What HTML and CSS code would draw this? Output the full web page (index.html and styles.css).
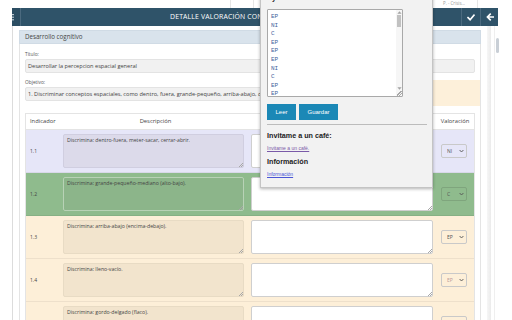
FILE: index.html
```html
<!DOCTYPE html>
<html lang="es">
<head>
<meta charset="utf-8">
<title>Detalle valoración</title>
<link rel="stylesheet" href="styles.css">
</head>
<body>
<div class="topstrip">
  <span class="tabsep tabsep-a"></span>
  <span class="tabsep tabsep-b"></span>
  <span class="crumb">P. - Crisis...</span>
  <span class="tabsep"></span>
</div>
<div class="app">
  <div class="bar">
    <div class="bar-menu">
      <svg width="8" height="18" viewBox="0 0 8 18"><rect x="-2" y="6" width="4" height="1.2" fill="#b9c6d0"/><rect x="-2" y="8.6" width="4" height="1.2" fill="#b9c6d0"/><rect x="-2" y="11.2" width="4" height="1.2" fill="#b9c6d0"/></svg>
    </div>
    <div class="bar-title">Detalle valoración contenidos</div>
    <div class="bar-btn">
      <svg width="8" height="7" viewBox="0 0 8 7"><polyline points="1,3.6 3.1,5.7 7,1.2" fill="none" stroke="#fff" stroke-width="1.7" stroke-linecap="square"/></svg>
    </div>
    <div class="bar-btn">
      <svg width="8" height="8" viewBox="0 0 8 8"><path d="M7.4 4H1.6M4.2 1.2L1.4 4l2.8 2.8" fill="none" stroke="#fff" stroke-width="1.6" stroke-linecap="square"/></svg>
    </div>
  </div>
  <div class="main">
    <div class="content">
      <div class="card">
        <div class="card-header">Desarrollo cognitivo</div>
        <div class="card-body">
          <div class="group group-first">
            <div class="label">Título:</div>
            <div class="field">Desarrollar la percepcion espacial general</div>
          </div>
          <div class="obj-row">
            <div class="group obj-group">
              <div class="label">Objetivo:</div>
              <div class="field">1. Discriminar conceptos espaciales, como dentro, fuera, grande-pequeño, arriba-abajo, delante-detrás, cerca-lejos.</div>
            </div>
            <div class="obj-aside"></div>
          </div>
          <div class="table">
            <div class="thead">
              <div class="th th-left">Indicador</div>
              <div class="th">Descripción</div>
              <div class="th">Observaciones</div>
              <div class="th">Valoración</div>
            </div>
            <div class="row row-ni">
              <div class="cell-ind">1.1</div>
              <div class="cell-desc"><div class="ta-wrap"><textarea class="ta-desc">Discrimina: dentro-fuera, meter-sacar, cerrar-abrir.</textarea><span class="grip"></span></div></div>
              <div class="cell-obs"><div class="ta-wrap"><textarea class="ta-obs"></textarea><span class="grip"></span></div></div>
              <div class="cell-val"><div class="sel"><select><option>NI</option></select><svg class="chev" width="5" height="4" viewBox="0 0 5 4"><polyline points="0.6,1 2.5,3 4.4,1" fill="none" stroke="#555" stroke-width="0.9"/></svg></div></div>
            </div>
            <div class="row row-c">
              <div class="cell-ind">1.2</div>
              <div class="cell-desc"><div class="ta-wrap"><textarea class="ta-desc">Discrimina: grande-pequeño-mediano (alto-bajo).</textarea><span class="grip"></span></div></div>
              <div class="cell-obs"><div class="ta-wrap"><textarea class="ta-obs"></textarea><span class="grip"></span></div></div>
              <div class="cell-val"><div class="sel"><select><option>C</option></select><svg class="chev" width="5" height="4" viewBox="0 0 5 4"><polyline points="0.6,1 2.5,3 4.4,1" fill="none" stroke="#555" stroke-width="0.9"/></svg></div></div>
            </div>
            <div class="row row-ep">
              <div class="cell-ind">1.3</div>
              <div class="cell-desc"><div class="ta-wrap"><textarea class="ta-desc">Discrimina: arriba-abajo (encima-debajo).</textarea><span class="grip"></span></div></div>
              <div class="cell-obs"><div class="ta-wrap"><textarea class="ta-obs"></textarea><span class="grip"></span></div></div>
              <div class="cell-val"><div class="sel"><select><option>EP</option></select><svg class="chev" width="5" height="4" viewBox="0 0 5 4"><polyline points="0.6,1 2.5,3 4.4,1" fill="none" stroke="#555" stroke-width="0.9"/></svg></div></div>
            </div>
            <div class="row row-ep">
              <div class="cell-ind">1.4</div>
              <div class="cell-desc"><div class="ta-wrap"><textarea class="ta-desc">Discrimina: lleno-vacío.</textarea><span class="grip"></span></div></div>
              <div class="cell-obs"><div class="ta-wrap"><textarea class="ta-obs"></textarea><span class="grip"></span></div></div>
              <div class="cell-val"><div class="sel"><select class="sel-faint"><option>EP</option></select><svg class="chev" width="5" height="4" viewBox="0 0 5 4"><polyline points="0.6,1 2.5,3 4.4,1" fill="none" stroke="#555" stroke-width="0.9"/></svg></div></div>
            </div>
            <div class="row row-ep">
              <div class="cell-ind">1.5</div>
              <div class="cell-desc"><div class="ta-wrap"><textarea class="ta-desc">Discrimina: gordo-delgado (flaco).</textarea><span class="grip"></span></div></div>
              <div class="cell-obs"><div class="ta-wrap"><textarea class="ta-obs"></textarea><span class="grip"></span></div></div>
              <div class="cell-val"><div class="sel"><select><option>EP</option></select><svg class="chev" width="5" height="4" viewBox="0 0 5 4"><polyline points="0.6,1 2.5,3 4.4,1" fill="none" stroke="#555" stroke-width="0.9"/></svg></div></div>
            </div>
          </div>
        </div>
      </div>
    </div>
    <div class="vscroll">
      <div class="track-a"></div>
      <div class="track-b"></div>
      <div class="thumb"></div>
    </div>
  </div>
</div>

<div class="popup">
  <div class="popup-title">Ayuda a la evaluación: datos</div>
  <div class="popup-box">
    <textarea class="popup-ta">EP
NI
C
EP
EP
EP
NI
C
EP
EP
C
NI
EP
EP
C
C
EP
NI
EP
EP</textarea>
    <div class="pscroll">
      <svg class="arrow" width="5" height="3" viewBox="0 0 5 3"><polygon points="2.5,0.3 4.6,2.7 0.4,2.7" fill="#a3a3a3"/></svg>
      <div class="pthumb"></div>
      <div class="pspacer"></div>
      <svg class="arrow" width="5" height="3" viewBox="0 0 5 3"><polygon points="0.4,0.3 4.6,0.3 2.5,2.7" fill="#a3a3a3"/></svg>
      <span class="pgrip"></span>
    </div>
  </div>
  <div class="popup-btns">
    <button class="btn btn-leer">Leer</button>
    <button class="btn btn-guardar">Guardar</button>
  </div>
  <div class="popup-hr"></div>
  <div class="popup-h">Invitame a un café:</div>
  <a class="popup-link visited" href="#">Invitame a un café.</a>
  <div class="popup-h">Información</div>
  <a class="popup-link" href="#">Información</a>
</div>
</body>
</html>
```
FILE: styles.css
```css
* { box-sizing: border-box; }

body {
  margin: 0;
  width: 512px;
  height: 320px;
  overflow: hidden;
  position: relative;
  background: #fff;
  font-family: "Open Sans", "Liberation Sans", sans-serif;
  color: #444;
}

/* top strip */
.topstrip {
  height: 8px;
  display: flex;
  align-items: stretch;
  padding-right: 34px;
}
.tabsep {
  width: 1px;
  background: #e6e6e6;
}
.tabsep-a { margin-left: 230px; }
.tabsep-b { margin-left: 22px; }
.crumb {
  margin-left: auto;
  margin-right: 12px;
  font-size: 4.4px;
  line-height: 7px;
  color: #9a9a9a;
}

/* app */
.app {
  margin-left: 12px;
  width: 488px;
  height: 312px;
  display: flex;
  flex-direction: column;
}

.bar {
  height: 18px;
  margin-right: 2px;
  background: #2f5369;
  display: flex;
  align-items: stretch;
}
.bar-menu {
  width: 9px;
  border-right: 1px solid #4b6a7f;
  overflow: hidden;
  background: #2b4d62;
}
.bar-menu svg { display: block; }
.bar-title {
  flex: 1;
  padding-left: 149px;
  color: #fff;
  font-size: 6.9px;
  line-height: 18px;
  text-transform: uppercase;
  letter-spacing: 0.15px;
  white-space: nowrap;
  overflow: hidden;
}
.bar-btn {
  width: 19px;
  border-left: 1px solid #4b6a7f;
  display: flex;
  align-items: center;
  justify-content: center;
}
.bar-btn:last-child { width: 18px; }

.main {
  flex: 1;
  display: flex;
  border-left: 1px solid #dcdcdc;
  overflow: hidden;
}
.content {
  flex: 1;
  padding: 4px 6px 0 6px;
  overflow: hidden;
}

.vscroll {
  width: 13px;
  display: flex;
  align-items: flex-start;
}
.track-a {
  width: 4px;
  height: 100%;
  background: linear-gradient(to right, #f6f6f6, #ebebeb);
}
.track-b {
  width: 1px;
  height: 100%;
  margin-left: 3px;
  background: #efefef;
}
.thumb {
  width: 3px;
  height: 15px;
  margin-top: 12px;
  margin-left: 1px;
  border-radius: 2px;
  background: #c9cfd6;
}

/* card */
.card {
  border: 1px solid #e4e4e4;
  border-bottom: none;
  background: #fff;
  min-height: 100%;
}
.card-header {
  height: 14px;
  margin: -1px -1px 0 -1px;
  padding-left: 5px;
  background: #d9e3ec;
  border: 1px solid #d0dbe5;
  font-size: 6.2px;
  line-height: 12px;
  color: #444;
}
.card-body {
  padding: 0 5px;
}

.group-first { margin-top: 7px; }
.label {
  font-size: 4.8px;
  line-height: 7px;
  color: #555;
}
.field {
  margin-top: 1px;
  height: 14px;
  padding-left: 2px;
  border: 1px solid #e3e3e3;
  border-radius: 2px;
  background: #f1f1f1;
  font-size: 5.6px;
  line-height: 12px;
  color: #444;
  white-space: nowrap;
  overflow: hidden;
}

.obj-row {
  display: flex;
  margin-top: 6px;
  margin-right: -5px;
}
.obj-group { flex: 1; }
.obj-aside {
  width: 62px;
  height: 26px;
  margin-top: 1px;
  background: #fdf0da;
}

/* table */
.table {
  margin-top: 7px;
  border: 1px solid #e4e4e4;
  border-bottom: none;
}
.thead,
.row {
  display: grid;
  grid-template-columns: 37px 185px 188px 38px;
}
.thead {
  height: 16px;
  border-bottom: 1px solid #e4e4e4;
}
.th {
  font-size: 5.8px;
  line-height: 15px;
  text-align: center;
  color: #444;
  white-space: nowrap;
}
.th-left {
  text-align: left;
  padding-left: 4px;
}

.row {
  height: 43px;
  border-bottom: 1px solid rgba(0, 0, 0, 0.06);
}
.row-ni { background: #e6e6f8; }
.row-c  { background: #8fbb8d; }
.row-ep { background: #fdefd8; }

.cell-ind {
  display: flex;
  align-items: center;
  padding-left: 4px;
  font-size: 5px;
  color: #444;
}
.cell-desc {
  padding: 4px 4px 4px 0;
}
.cell-obs {
  padding: 4px 3px;
}
.cell-val {
  display: flex;
  align-items: center;
  padding-left: 5px;
}

.ta-wrap {
  position: relative;
  height: 34px;
}
textarea {
  display: block;
  width: 100%;
  height: 34px;
  margin: 0;
  border-radius: 2px;
  resize: none;
  overflow: hidden;
  font-family: "Open Sans", "Liberation Sans", sans-serif;
}
.grip {
  position: absolute;
  right: 1px;
  bottom: 1px;
  width: 4px;
  height: 4px;
  background: linear-gradient(135deg, transparent 0 40%, #a8a8a8 40% 52%, transparent 52% 68%, #a8a8a8 68% 80%, transparent 80%);
}
.ta-desc {
  padding: 2px 3px;
  border: 1px solid #cfcfdc;
  font-size: 5.2px;
  line-height: 6.5px;
  color: #444;
}
.row-ni .ta-desc { background: #dcdaea; border-color: #d0cee0; }
.row-c .ta-desc  { background: #8cb58a; border-color: #b8d2b6; }
.row-ep .ta-desc { background: #f2e4cd; border-color: #e8dbc4; }

.ta-obs {
  border: 1px solid #cfcfcf;
  background: #fff;
}

.sel {
  position: relative;
  width: 26px;
  height: 14px;
}
.sel select {
  display: block;
  appearance: none;
  -webkit-appearance: none;
  width: 100%;
  height: 14px;
  margin: 0;
  padding: 0 0 0 5px;
  border: 1px solid #c9c9c9;
  border-radius: 2px;
  background: transparent;
  font-family: "Open Sans", "Liberation Sans", sans-serif;
  font-size: 5px;
  line-height: 12px;
  color: #555;
}
.row-c .sel select { border-color: #7fa57d; }
.sel-faint { color: #b99a9a !important; }
.chev {
  position: absolute;
  right: 3px;
  top: 5px;
}

/* popup overlay */
.popup {
  position: absolute;
  left: 260px;
  top: -12px;
  width: 173px;
  height: 200px;
  padding: 4px 0 0 6px;
  background: #f2f2f2;
  border: 1px solid #c4c4c4;
  box-shadow: 0 1px 3px rgba(0, 0, 0, 0.3);
  font-family: "Liberation Sans", Arial, sans-serif;
}
.popup-title {
  font-size: 7.2px;
  font-weight: bold;
  line-height: 10px;
  color: #222;
  white-space: nowrap;
}
.popup-box {
  display: flex;
  width: 136px;
  height: 88px;
  margin-top: 6px;
  border: 1px solid #a9a9a9;
  border-radius: 1px;
  background: #fff;
}
.popup-ta {
  flex: 1;
  height: 100%;
  padding: 3px 2px 3px 3px;
  border: none;
  border-radius: 0;
  background: #fff;
  font-family: "Liberation Mono", "DejaVu Sans Mono", monospace;
  font-size: 6px;
  line-height: 8.6px;
  color: #3f5f9c;
}
.pscroll {
  width: 6px;
  display: flex;
  flex-direction: column;
  align-items: center;
  padding-top: 1px;
  background: #f6f6f6;
  position: relative;
}
.arrow { display: block; flex: none; }
.pthumb {
  width: 4px;
  height: 12px;
  margin-top: 1px;
  background: #c1c1c1;
}
.pspacer { flex: 1; }
.pscroll .arrow:last-of-type { margin-bottom: 6px; }
.pgrip {
  position: absolute;
  right: 0;
  bottom: 0;
  width: 5px;
  height: 5px;
  background: linear-gradient(135deg, transparent 0 40%, #a8a8a8 40% 52%, transparent 52% 68%, #a8a8a8 68% 80%, transparent 80%);
}

.popup-btns {
  display: flex;
  gap: 3px;
  margin-top: 7px;
}
.btn {
  height: 16px;
  padding: 0;
  border: none;
  background: #1b88b6;
  color: #fff;
  font-family: "Liberation Sans", Arial, sans-serif;
  font-size: 6px;
}
.btn-leer { width: 29px; }
.btn-guardar { width: 39px; }

.popup-hr {
  width: 160px;
  height: 1px;
  margin-top: 4px;
  background: #bcbcbc;
}
.popup-h {
  margin-top: 6px;
  font-size: 7.2px;
  font-weight: bold;
  line-height: 9px;
  color: #222;
}
.popup-link {
  display: block;
  margin-top: 5px;
  font-size: 5px;
  line-height: 6px;
  color: #4a55d6;
  text-decoration: underline;
}
.popup-link.visited { color: #7a5aa8; }
```
